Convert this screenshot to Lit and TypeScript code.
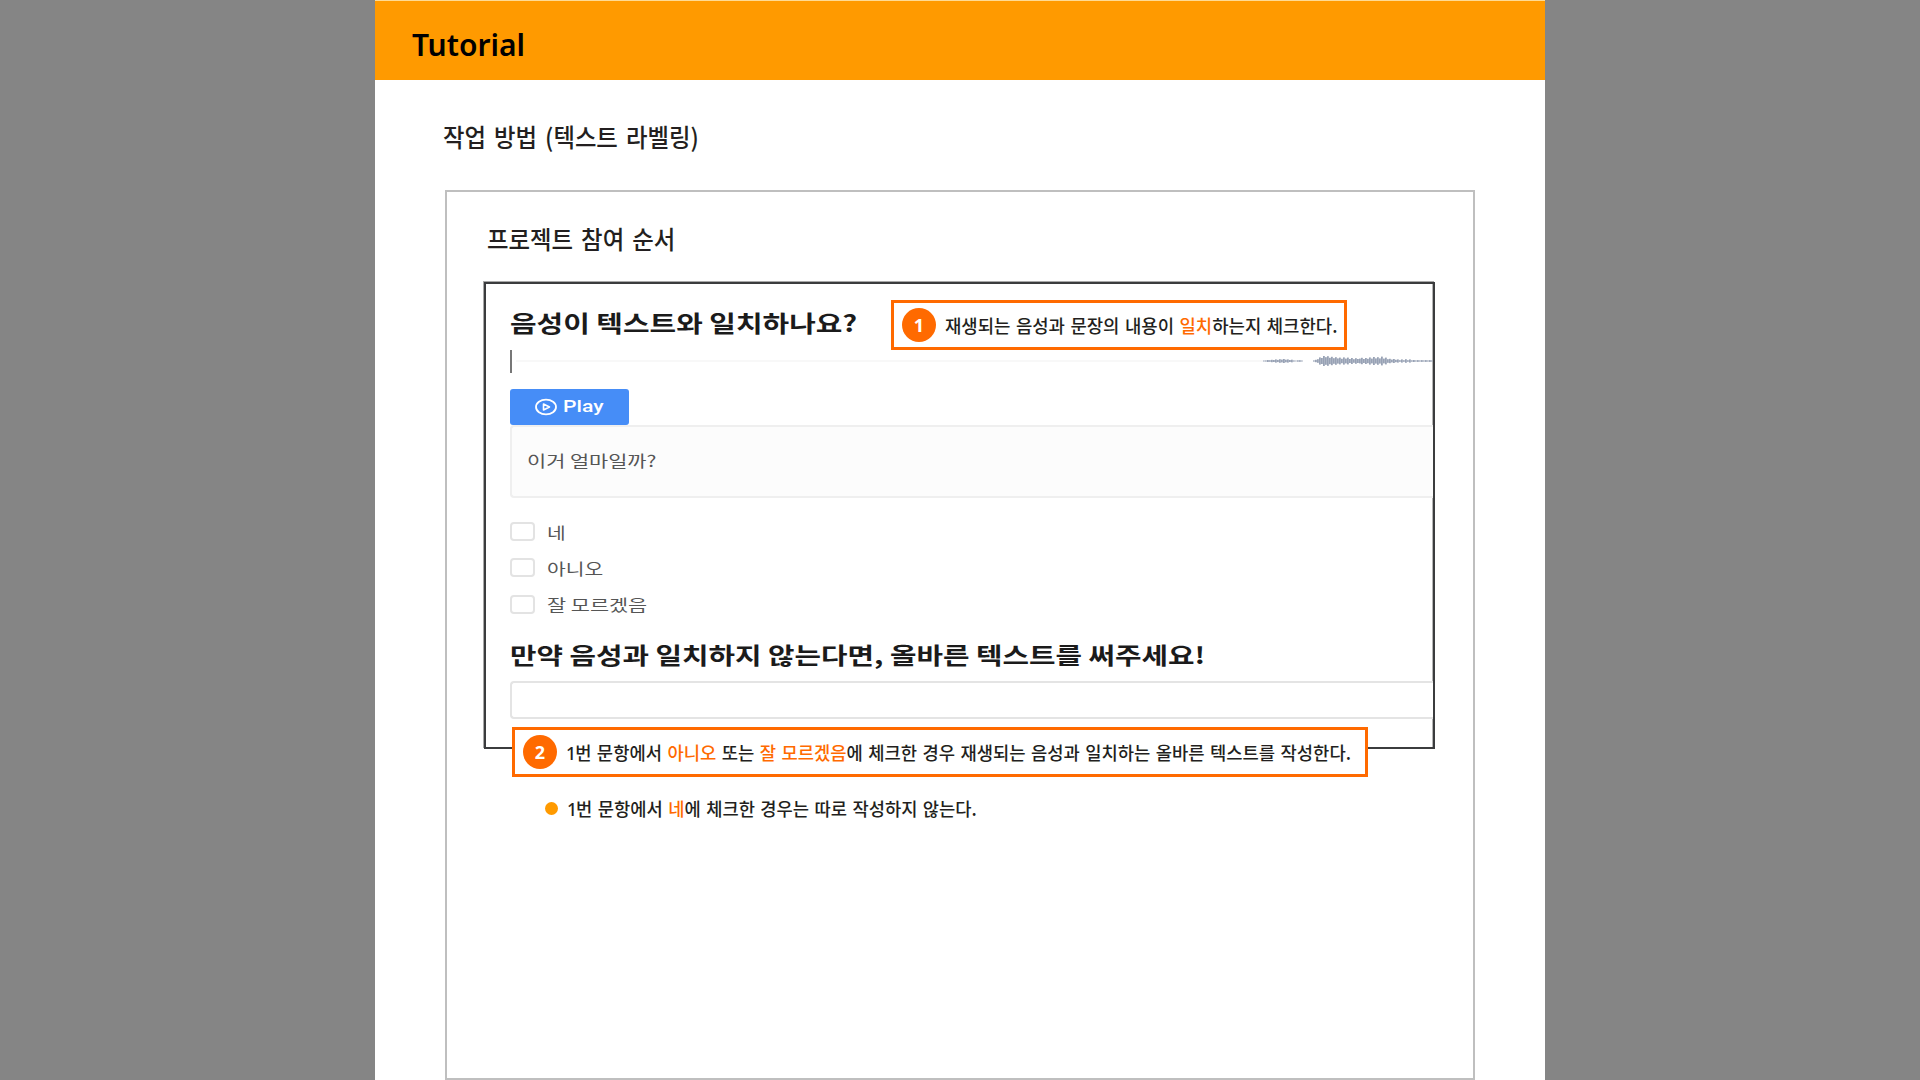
import { LitElement, html, css, svg } from "lit";
import { customElement, property } from "lit/decorators.js";

/* A single line of text condensed or expanded to an exact width. */
@customElement("fit-text")
class FitText extends LitElement {
  @property({ type: Number }) width = 100;
  static styles = css`
    :host { display: block; white-space: nowrap; flex: none; }
    .line { display: inline-block; transform-origin: 0 50%; }
  `;
  firstUpdated() {
    const line = this.renderRoot.querySelector(".line") as HTMLElement;
    this.style.width = this.width + "px";
    line.style.transform = `scaleX(${this.width / line.offsetWidth})`;
  }
  render() {
    return html`<span class="line"><slot></slot></span>`;
  }
}

/* Amplitudes of the audio preview, one bar per two pixels. */
const WAVE = [
  0.5, 0.6, 1, 0.8, 1.2, 1, 1.6, 1.1, 1.8, 1.4, 2, 1.3, 1.6, 1, 1.3, 0.6, 0.4, 0.7, 0.8, 0.5,
  0, 0, 0, 0, 0, 0.6, 1.2, 1.8, 3.6, 3, 5, 3.8, 4.8, 3.2, 4.2, 2.8, 3.8, 2.6, 3.4, 2.2, 3.6, 2.4, 3.4,
  2, 3, 1.8, 2.8, 2, 2.4, 3.2, 2, 3, 2.2, 3.6, 2.4, 4, 2.6, 3.8, 2.6, 4.4, 2.4, 3.4, 1.8, 2.2,
  1.4, 2, 1.2, 1.6, 0.8, 1.6, 0.8, 1.8, 0.8, 1.6, 0.7, 1, 0.6, 0.9, 0.6, 0.9, 0.6, 0.9, 0.6, 0.9, 0.6,
];

@customElement("app-root")
class AppRoot extends LitElement {
  static styles = css`
    :host {
      display: flex;
      justify-content: center;
      height: 1080px;
      overflow: hidden;
      background: #858585;
      color: #231f20;
      font-family: "Noto Sans", "Noto Sans CJK KR", sans-serif;
    }
    .page { width: 1170px; height: 1080px; background: #fff; display: flex; flex-direction: column; }
    .header {
      height: 80px; box-sizing: border-box; flex: none;
      background: #ff9a00; border-top: 1px solid #ffdb94;
      padding: 23px 0 0 37px; color: #000;
      font-size: 30px; line-height: 42px; font-weight: 600;
    }
    .title { padding: 38px 0 0 68px; height: 110px; box-sizing: border-box; flex: none; }
    .heading {
      font-family: "Noto Sans CJK KR", sans-serif; font-size: 25px; line-height: 36px; font-weight: 500;
      word-spacing: 3px;
    }
    .card {
      margin: 0 70px; height: 890px; box-sizing: border-box; flex: none;
      border: 2px solid #bfbfbf; padding: 28px 0 0 36px;
    }
    .card .heading { padding-left: 4px; height: 62px; }
    .frame {
      position: relative; width: 951px; height: 467px; box-sizing: border-box; margin-left: 1px;
      border: 2px solid #3b3c3e; box-shadow: -1px -1px 0 #a8a8a8, inset -1px 0 0 #b4b4b4;
      padding: 24px 0 0 24px; display: flex; flex-direction: column;
      font-family: "Noto Sans CJK KR", sans-serif;
    }
    .question { font-size: 23px; line-height: 28px; font-weight: 700; color: #1b1b1b; height: 41px; flex: none; }
    .track { height: 24px; display: flex; align-items: center; flex: none; }
    .cursor { width: 2px; height: 23px; background: #777; margin-right: 4px; }
    .wire { flex: 1; height: 2px; background: #f8f8f8; }
    .wave { width: 170px; height: 14px; flex: none; }
    .play {
      margin-top: 16px; width: 119px; height: 36px; box-sizing: border-box; flex: none;
      border-radius: 3px; background: #468df7; color: #fff; position: relative;
      display: flex; align-items: center; padding-left: 24px; gap: 5px;
      font: 500 16px/24px Roboto, sans-serif;
    }
    .play svg { width: 24px; height: 18px; }
    .sentence {
      height: 73px; box-sizing: border-box; flex: none;
      border: 2px solid #efefef; border-right: 0; border-radius: 4px 0 0 4px;
      background: #fcfcfc; padding: 20px 0 0 15px;
    }
    .small { font-size: 16px; line-height: 26px; color: #555; }
    .options { margin-top: 15.5px; display: flex; flex-direction: column; flex: none; height: 126px; }
    .option { display: flex; align-items: center; height: 36.3px; gap: 12px; }
    .box { width: 25px; height: 19px; box-sizing: border-box; border: 2px solid #e3e3e3; border-radius: 4px; background: #fff; }
    .second { height: 41.5px; }
    .input {
      height: 37.5px; box-sizing: border-box; flex: none; background: #fff;
      border: 2px solid #e4e4e4; border-right: 0; border-radius: 4px 0 0 4px;
    }
    .callout {
      position: absolute; height: 50px; box-sizing: border-box;
      border: 3px solid #ff6a00; background: #fff;
      display: flex; align-items: center; gap: 9px; padding-left: 8px;
    }
    .first-callout { left: 405px; top: 16px; width: 456px; }
    .second-callout { left: 26px; top: 443px; width: 856px; }
    .badge {
      width: 34px; height: 34px; border-radius: 50%; background: #ff6a00; color: #fff; flex: none;
      font: 700 18px/34px "Noto Sans", sans-serif; text-align: center;
    }
    .note-text { font: 500 18px/26px "Noto Sans CJK KR", sans-serif; color: #231f20; word-spacing: 1.5px; }
    .num { font-family: "Noto Sans", sans-serif; line-height: 1; margin-right: -1px; }
    .hot { color: #ff6a00; }
    .bullet { display: flex; align-items: center; margin: 46px 0 0 62px; gap: 9px; }
    .dot { width: 13px; height: 13px; border-radius: 50%; background: #ff9a00; }
  `;

  private option(label: string, width: number) {
    return html`<div class="option small"><span class="box"></span><fit-text .width=${width}>${label}</fit-text></div>`;
  }

  render() {
    return html`
      <main class="page">
        <header class="header"><fit-text .width=${113}>Tutorial</fit-text></header>
        <div class="title heading"><fit-text .width=${256}>작업 방법 (텍스트 라벨링)</fit-text></div>
        <section class="card">
          <div class="heading"><fit-text .width=${188}>프로젝트 참여 순서</fit-text></div>
          <div class="frame">
            <div class="question"><fit-text .width=${347}>음성이 텍스트와 일치하나요?</fit-text></div>
            <div class="track">
              <span class="cursor"></span><span class="wire"></span>
              <svg class="wave" viewBox="0 0 170 14">
                ${WAVE.map((a, i) => svg`<rect x=${i * 2} y=${7 - a} width="1.8" height=${a * 2} fill="#98a2b5"></rect>`)}
              </svg>
            </div>
            <div class="play">
              <svg viewBox="0 0 24 18" fill="none" stroke="#fff">
                <ellipse cx="12" cy="9" rx="10" ry="7.4" stroke-width="1.8"></ellipse>
                <path d="M9.5 6 L15.5 9 L9.5 12 Z" stroke-width="1.6" stroke-linejoin="round"></path>
              </svg>
              <fit-text .width=${41}>Play</fit-text>
            </div>
            <div class="sentence small"><fit-text .width=${130}>이거 얼마일까?</fit-text></div>
            <div class="options">
              ${this.option("네", 19)} ${this.option("아니오", 56)} ${this.option("잘 모르겠음", 100)}
            </div>
            <div class="question second"><fit-text .width=${695}>만약 음성과 일치하지 않는다면, 올바른 텍스트를 써주세요!</fit-text></div>
            <div class="input"></div>
            <div class="callout first-callout">
              <span class="badge">1</span>
              <fit-text class="note-text" .width=${392}>재생되는 음성과 문장의 내용이 <span class="hot">일치</span>하는지 체크한다.</fit-text>
            </div>
            <div class="callout second-callout">
              <span class="badge">2</span>
              <fit-text class="note-text" .width=${785}><span class="num">1</span>번 문항에서 <span class="hot">아니오</span> 또는 <span class="hot">잘 모르겠음</span>에 체크한 경우 재생되는 음성과 일치하는 올바른 텍스트를 작성한다.</fit-text>
            </div>
          </div>
          <div class="bullet">
            <span class="dot"></span>
            <fit-text class="note-text" .width=${410}><span class="num">1</span>번 문항에서 <span class="hot">네</span>에 체크한 경우는 따로 작성하지 않는다.</fit-text>
          </div>
        </section>
      </main>
    `;
  }
}
